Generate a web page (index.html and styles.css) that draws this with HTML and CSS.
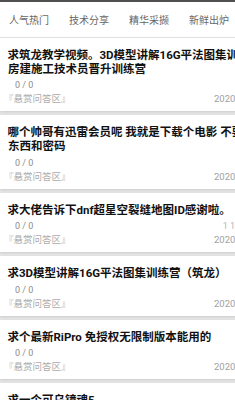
FILE: index.html
```html
<!DOCTYPE html>
<html lang="zh">
<head>
<meta charset="utf-8">
<link rel="stylesheet" href="styles.css">
</head>
<body>
<div class="page">
  <div class="topbar"></div>
  <nav class="tabs">
    <span class="tab">人气热门</span>
    <span class="tab">技术分享</span>
    <span class="tab">精华采撷</span>
    <span class="tab">新鲜出炉</span>
  </nav>
  <div class="list">
    <div class="card">
      <div class="title">求筑龙教学视频。3D模型讲解16G平法图集训练营</div>
      <div class="title">房建施工技术员晋升训练营</div>
      <div class="count"><span>0 / 0</span></div>
      <div class="meta"><span class="src">『悬赏问答区』</span><span class="date">2020-05-06</span></div>
    </div>
    <div class="card">
      <div class="title">哪个帅哥有迅雷会员呢 我就是下载个电影 不要其他</div>
      <div class="title">东西和密码</div>
      <div class="count"><span>0 / 0</span></div>
      <div class="meta"><span class="src">『悬赏问答区』</span><span class="date">2020-05-06</span></div>
    </div>
    <div class="card">
      <div class="title">求大佬告诉下dnf超星空裂缝地图ID感谢啦。</div>
      <div class="count"><span>0 / 0</span><span class="extra">1 1</span></div>
      <div class="meta"><span class="src">『悬赏问答区』</span><span class="date">2020-05-06</span></div>
    </div>
    <div class="card">
      <div class="title">求3D模型讲解16G平法图集训练营（筑龙）</div>
      <div class="count"><span>0 / 0</span></div>
      <div class="meta"><span class="src">『悬赏问答区』</span><span class="date">2020-05-06</span></div>
    </div>
    <div class="card">
      <div class="title">求个最新RiPro 免授权无限制版本能用的</div>
      <div class="count"><span>0 / 0</span></div>
      <div class="meta"><span class="src">『悬赏问答区』</span><span class="date">2020-05-06</span></div>
    </div>
    <div class="card">
      <div class="title">求一个可乌镜魂5</div>
      <div class="count"><span>0 / 0</span></div>
      <div class="meta"><span class="src">『悬赏问答区』</span><span class="date">2020-05-06</span></div>
    </div>
  </div>
</div>
</body>
</html>
```
FILE: styles.css
```css
html, body {
  margin: 0;
  padding: 0;
  overflow: hidden;
  background: #ffffff;
}
body {
  width: 235px;
  height: 400px;
  font-family: Roboto, "Noto Sans CJK SC", sans-serif;
}
.page {
  width: 270px;
}
.topbar {
  height: 2px;
  background: #505050;
}
.tabs {
  display: flex;
  align-items: center;
  gap: 20px;
  height: 35px;
  padding-left: 9px;
  border-bottom: 1px solid #e6e6e6;
  font-size: 10px;
  color: #666666;
}
.tab {
  width: 40px;
  white-space: nowrap;
}
.list {
  display: flex;
  flex-direction: column;
  gap: 4px;
  background: #e9e9e9;
}
.card {
  background: #ffffff;
  padding: 11px 8px 5px 8px;
  box-shadow: 0 1px 3px rgba(0, 0, 0, 0.14);
}
.title {
  font-size: 11.5px;
  line-height: 13.9px;
  font-weight: 700;
  color: #111111;
  white-space: nowrap;
}
.title:first-child {
  margin-left: -0.5px;
}
.count {
  display: flex;
  justify-content: space-between;
  margin-top: 2.6px;
  padding-left: 7px;
  font-size: 9px;
  line-height: 13px;
  color: #8c8c8c;
}
.extra {
  color: #b5b5b5;
  margin-right: 27px;
}
.meta {
  display: flex;
  justify-content: space-between;
  font-size: 9.5px;
  line-height: 14px;
  color: #ababab;
}
.src {
  margin-left: -4px;
}
.date {
  color: #a0a0a0;
}
```
